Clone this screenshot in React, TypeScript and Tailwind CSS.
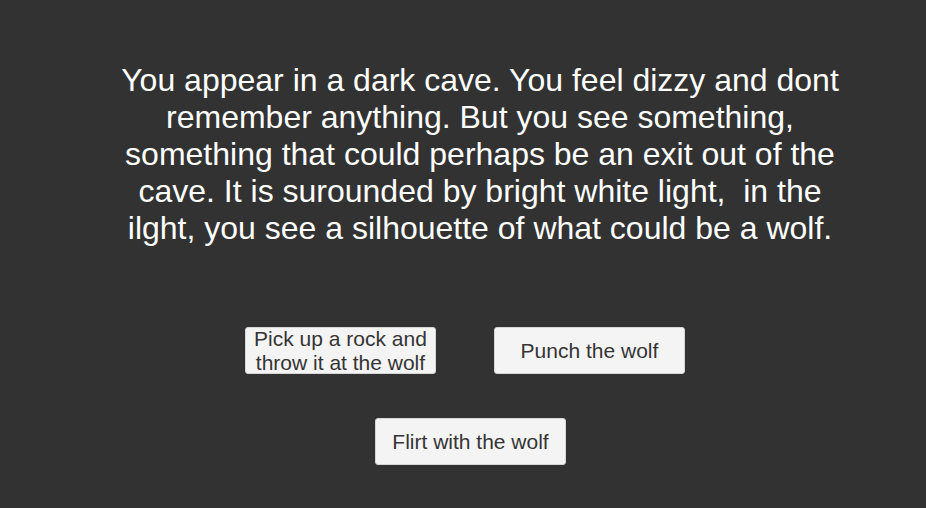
export default function App() {
  const font = { fontFamily: '"Liberation Sans", Arial, sans-serif' };
  const btn =
    "w-[191px] h-[47px] bg-[#f4f4f4] border border-[#d6d6d6] rounded-[3px] text-[#353535] text-[21px] leading-[24px] flex items-center justify-center text-center";
  return (
    <div className="w-[926px] h-[508px] bg-[#323232] overflow-hidden flex flex-col" style={font}>
      <div className="pt-[62px] pl-[115px]">
        <p className="w-[730px] text-center text-white text-[32px] leading-[37px]">
          You appear in a dark cave. You feel dizzy and dont remember anything. But you see something, something that could perhaps be an exit out of the cave. It is surounded by bright white light,&nbsp; in the ilght, you see a silhouette of what could be a wolf.
        </p>
      </div>
      <div className="flex gap-[58px] pl-[245px] mt-[80px]">
        <button className={btn}>
          Pick up a rock and<br />throw it at the wolf
        </button>
        <button className={btn}>Punch the wolf</button>
      </div>
      <div className="flex pl-[375px] mt-[44px]">
        <button className={btn}>Flirt with the wolf</button>
      </div>
    </div>
  );
}
